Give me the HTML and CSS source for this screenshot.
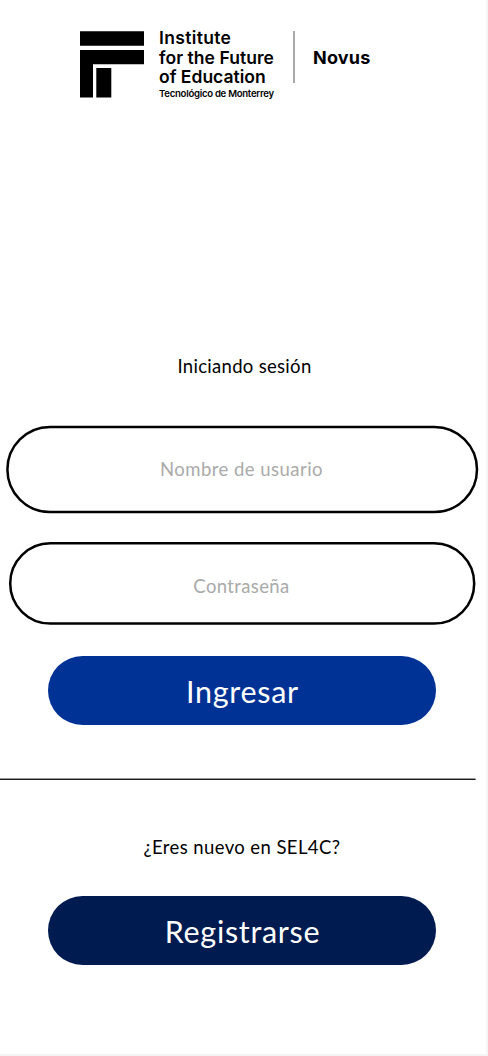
FILE: index.html
```html
<!DOCTYPE html>
<html lang="es">
<head>
<meta charset="utf-8">
<title>Iniciando sesión</title>
<link rel="stylesheet" href="styles.css">
</head>
<body>
<main class="screen">
  <header class="brand">
    <svg class="mark" width="64" height="67" viewBox="0 0 64 67" aria-hidden="true">
      <path d="M0 .3h64v14.4H0zM0 19h64v14.3H13v33.2H0zM16.3 37h15v29.5h-15z"/>
    </svg>
    <div class="institute">
      <span class="name l1">Institute</span>
      <span class="name l2">for the Future</span>
      <span class="name l3">of Education</span>
      <span class="school">Tecnológico de Monterrey</span>
    </div>
    <span class="divider"></span>
    <span class="novus">Novus</span>
  </header>

  <h1 class="caption title"><span>Iniciando sesión</span></h1>

  <div class="field user">
    <svg class="outline" width="473" height="90" aria-hidden="true"><rect x="1.4" y="1.9" width="469.6" height="85.2" rx="42.6"/></svg>
    <span class="hint">Nombre de usuario</span>
  </div>
  <div class="field pass">
    <svg class="outline" width="467" height="84" aria-hidden="true"><rect x="1.2" y="1.3" width="464" height="80.3" rx="40.1"/></svg>
    <span class="hint">Contraseña</span>
  </div>

  <button class="btn login"><span>Ingresar</span></button>
  <svg class="rule" width="476" height="2" aria-hidden="true"><rect y=".6" width="475.6" height="1.3"/></svg>
  <p class="caption ask"><span>¿Eres nuevo en SEL4C?</span></p>
  <button class="btn register"><span>Registrarse</span></button>
</main>
</body>
</html>
```
FILE: styles.css
```css
* { box-sizing: border-box; }
body { margin: 0; background: #f5f5f5; font-family: Lato, sans-serif; color: #000; }
.screen { width: 486px; height: 1054px; background: #fff; display: flex; flex-direction: column; overflow: hidden; }
.brand { display: flex; align-items: flex-start; height: 80px; margin: 31px 0 0 80px; font-family: Inter, sans-serif; }
.mark { flex: none; }
.institute { width: 134px; margin: -3px 0 0 15px; display: flex; flex-direction: column; white-space: nowrap; }
.name { font-weight: 600; font-size: 17.5px; line-height: 19.5px; }
.l1 { letter-spacing: .35px; }
.l2 { letter-spacing: .05px; }
.school { font-weight: 600; font-size: 9.6px; line-height: 14px; letter-spacing: -.28px; }
.divider { width: 2px; height: 52px; background: #aaa; }
.novus { font-weight: 700; font-size: 18px; line-height: 22px; margin: 16px 0 0 18px; letter-spacing: .2px; }
.caption { margin: 0; height: 24px; line-height: 24px; font-size: 18.5px; font-weight: 400; text-align: center; white-space: nowrap; }
.title { margin-top: 243px; width: 489px; letter-spacing: .3px; }
.field { position: relative; flex: none; display: flex; align-items: center; justify-content: center; }
.outline { position: absolute; left: 0; top: 0; overflow: visible; fill: none; stroke: #000; stroke-width: 2.5; }
.user { width: 471px; height: 90px; margin: 47px 0 0 6px; padding-bottom: 2px; letter-spacing: .47px; }
.pass { width: 465px; height: 84px; margin: 27px 0 0 9px; padding-top: 4px; letter-spacing: .37px; }
.hint { color: #aaa; font-size: 18.5px; line-height: 24px; }
.btn { flex: none; width: 388px; height: 69px; margin-left: 47.5px; padding: 0 0 0 2px; border: 0; border-radius: 34.5px; color: #fff; font: 400 30.5px/40px Lato, sans-serif; letter-spacing: .7px; }
.login { margin-top: 30px; background: #003296; }
.rule { flex: none; display: block; margin-top: 53px; fill: #000; }
.ask { margin-top: 55px; width: 484px; letter-spacing: .4px; }
.register { margin-top: 37px; background: #001b50; }
```
